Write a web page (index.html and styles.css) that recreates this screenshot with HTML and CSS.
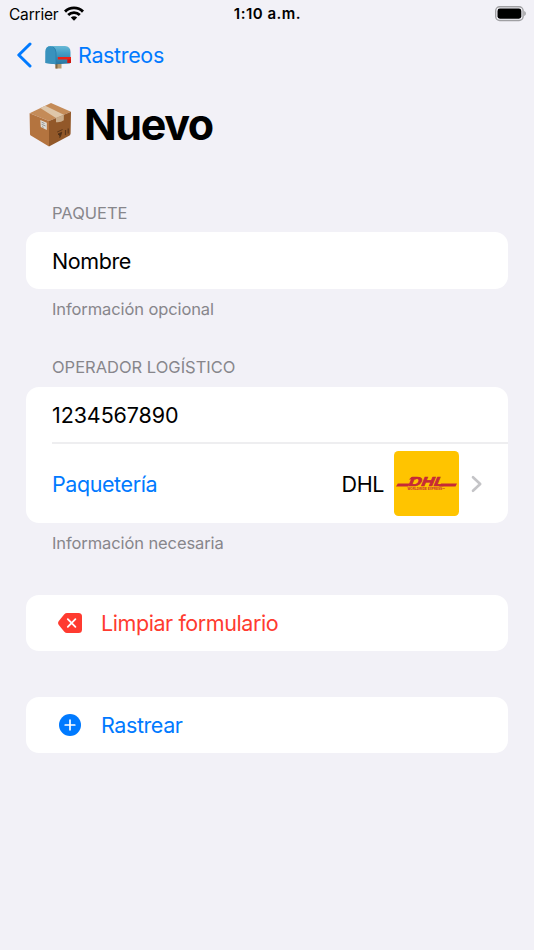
FILE: index.html
```html
<!DOCTYPE html>
<html lang="es">
<head>
    <meta charset="utf-8">
    <title>Nuevo</title>
    <link rel="stylesheet" href="styles.css">
</head>
<body>
    <header class="status-bar">
        <div class="carrier">
            <span>Carrier</span>
            <svg class="wifi" width="20" height="15" viewBox="0 0 20 15">
                <g fill="none" stroke="#000" stroke-width="2.9">
                    <path d="M1 5.6C6 .6 14 .6 19 5.6"/>
                    <path d="M4.2 9C7.5 5.8 12.5 5.8 15.8 9"/>
                </g>
                <path d="M10 14.7L6.8 11.5C8.6 9.9 11.4 9.9 13.2 11.5Z"/>
            </svg>
        </div>
        <span class="time">1:10 a.m.</span>
        <svg class="battery" width="32" height="16" viewBox="0 0 32 16">
            <rect x=".7" y=".7" width="27.4" height="13.8" rx="4" fill="none" stroke="#a0a0a3" stroke-width="1.4"/>
            <rect x="2.5" y="2.5" width="23.8" height="10.2" rx="2.4"/>
            <path d="M29.2 5.1C31.4 6 31.4 9.2 29.2 10.1Z" fill="#a0a0a3"/>
        </svg>
    </header>

    <nav class="nav">
        <svg class="back" width="16" height="26" viewBox="0 0 16 26">
            <path d="M14 2L2.8 13L14 24" fill="none" stroke="#007aff" stroke-width="3" stroke-linecap="round" stroke-linejoin="round"/>
        </svg>
        <svg class="mailbox" width="27" height="24" viewBox="0 0 27 24">
            <defs>
                <linearGradient id="boxTop" x1="0" y1="0" x2="0" y2="1">
                    <stop offset="0" stop-color="#68b9d6"/>
                    <stop offset=".35" stop-color="#46a0c7"/>
                    <stop offset="1" stop-color="#27749f"/>
                </linearGradient>
            </defs>
            <path d="M10.5 17H16.5V23.5H10.5Z" fill="#b99b6d"/>
            <path d="M10.5 17H12.5V23.5H10.5Z" fill="#826844"/>
            <path d="M.5 18V6.5Q.5 1 6 1H20Q25.5 1.5 25.5 7V17Q25.5 18.5 24 18.5L11 19.3Z" fill="url(#boxTop)"/>
            <path d="M.5 18V6.5Q.5 1.2 5.5 1.2Q11 1.6 11 7.5V19.3Z" fill="#3992bd"/>
            <path d="M11 19.2V7.5Q10.8 3.5 8 1.8" fill="none" stroke="#287ca8" stroke-width=".8"/>
            <path d="M12.8 12H26V18H22.5V14.6H12.8Z" fill="#ed2115"/>
            <path d="M22.5 14.5H26V18H22.5Z" fill="#cf160f"/>
        </svg>
        <span class="nav-text">Rastreos</span>
    </nav>

    <div class="title">
        <svg width="44" height="46" viewBox="0 0 44 46">
            <path d="M1.6 11.2L23 1L43 9.8L21 19Z" fill="#c48b58"/>
            <path d="M1.6 11.2L21 19V44.5L2.8 33.5Q2 33 2 32Z" fill="#b4743f"/>
            <path d="M21 19L43 9.8L42.6 31.5Q42.6 32.8 41.6 33.4L21 44.5Z" fill="#925829"/>
            <path d="M12.3 6.1L17.3 3.7L35.8 12.8L28 16Z" fill="#dec6a9"/>
            <path d="M28 16L35.8 12.8V18.2Q33 20.7 28 20.2Z" fill="#c9ac8b"/>
            <path d="M12.3 18L18.8 20.8V28L12.8 25Z" fill="#dedcd6"/>
            <path d="M13.6 20.2L16.5 21.5M13.6 22.3L17.5 24M14 24.6L15.6 25.4" stroke="#8b8b89" stroke-width=".9"/>
            <path d="M29.2 30L34.6 27.5M30 32L33.8 30.2L32.5 34.5ZM31.8 34V36" fill="#4e2f17" stroke="#4e2f17" stroke-width=".8"/>
            <path d="M37.5 28V33M40.2 26.5V31.5" stroke="#5d371b" stroke-width="1.2"/>
        </svg>
        <h1>Nuevo</h1>
    </div>

    <main>
        <section class="section-name">
            <h2 class="package-label">PAQUETE</h2>
            <div class="card">
                <div class="row"><span class="name">Nombre</span></div>
            </div>
            <p class="optional">Información opcional</p>
        </section>

        <section class="section-operator">
            <h2 class="operator-label">OPERADOR LOGÍSTICO</h2>
            <div class="card">
                <div class="row"><span class="number">1234567890</span></div>
                <div class="row row-operator">
                    <span class="operator">Paquetería</span>
                    <span class="value">DHL</span>
                    <svg class="logo" width="65" height="65" viewBox="0 0 65 65">
                        <rect width="65" height="65" rx="4.5" fill="#ffc400"/>
                        <g fill="#c62a36">
                            <path d="M3.8 32.4H15.8L14 35.6H2Z"/>
                            <path d="M47 32.4H63L61.5 35.6H45Z"/>
                            <path d="M17.5 26H24L22 28.4H15Z"/>
                            <text class="logo-name" transform="translate(13.5 35.4) skewX(-22)" textLength="36" lengthAdjust="spacingAndGlyphs">DHL</text>
                            <text class="logo-sub" x="13.5" y="39.4" textLength="37.5" lengthAdjust="spacingAndGlyphs">WORLDWIDE EXPRESS™</text>
                        </g>
                    </svg>
                    <svg class="chevron" width="12" height="18" viewBox="0 0 12 18">
                        <path d="M2 2.2L9.2 9L2 15.8" fill="none" stroke="#c4c4c7" stroke-width="2.6" stroke-linecap="round" stroke-linejoin="round"/>
                    </svg>
                </div>
            </div>
            <p class="required">Información necesaria</p>
        </section>

        <div class="card action clear">
            <svg width="24" height="20" viewBox="0 0 24 20">
                <path d="M9 0H20.5Q24 0 24 3.5V16.5Q24 20 20.5 20H9Q7.5 20 6.3 18.8L.8 12Q-.7 10 .8 8L6.3 1.2Q7.5 0 9 0Z" fill="#ff3b30"/>
                <path d="M9.8 6.2L17.4 13.8M17.4 6.2L9.8 13.8" stroke="#fff" stroke-width="1.8" stroke-linecap="round"/>
            </svg>
            <span>Limpiar formulario</span>
        </div>

        <div class="card action track">
            <svg width="24" height="22" viewBox="0 0 24 22">
                <circle cx="12" cy="11" r="11" fill="#007aff"/>
                <path d="M12 6.2V15.8M7.2 11H16.8" stroke="#fff" stroke-width="1.7" stroke-linecap="round"/>
            </svg>
            <span>Rastrear</span>
        </div>
    </main>
</body>
</html>
```
FILE: styles.css
```css
* {
    box-sizing: border-box;
}

body {
    font-family: Inter, "Liberation Sans", sans-serif;
    font-size: 21.5px;
    letter-spacing: -0.42px;
    background-color: #f2f1f7;
    color: #000;
    margin: 0;
    min-height: 950px;
}

svg {
    display: block;
    flex-shrink: 0;
}

h1, h2, p {
    margin: 0;
}

.status-bar {
    display: grid;
    grid-template-columns: 1fr auto 1fr;
    align-items: center;
    height: 28px;
    padding: 0 7px 0 9px;
    font-size: 15.5px;
}

.carrier {
    display: flex;
    align-items: center;
    gap: 6px;
    letter-spacing: -0.2px;
}

.wifi {
    margin-top: -2px;
}

.time {
    font-size: 15px;
    font-weight: 600;
    letter-spacing: 0.5px;
    margin: -1px 1px 0 0;
}

.battery {
    justify-self: end;
    margin-top: -1px;
}

.nav {
    display: flex;
    align-items: center;
    height: 54px;
    padding-left: 16px;
    color: #007aff;
}

.mailbox {
    margin: 3px 6px 0 13px;
}

.nav-text {
    letter-spacing: -0.35px;
    margin-top: -1px;
}

.title {
    display: flex;
    align-items: center;
    height: 86px;
    padding-left: 28px;
    gap: 12px;
}

.title svg {
    margin-top: -1px;
}

h1 {
    font-size: 43px;
    font-weight: 700;
    line-height: 52px;
    letter-spacing: -1.4px;
    margin-top: -2px;
}

main {
    padding: 34px 26px 0;
}

h2, p {
    color: #87868b;
    font-size: 16.5px;
    font-weight: 400;
    line-height: 22px;
    letter-spacing: -0.1px;
    padding-left: 26px;
}

h2 {
    letter-spacing: 0;
    margin-bottom: 8px;
}

p {
    margin-top: 9px;
}

.section-operator {
    margin-top: 37px;
}

.operator-label {
    line-height: 21px;
    margin-bottom: 9px;
}

.card {
    background-color: #fff;
    border-radius: 13px;
}

.row {
    display: flex;
    align-items: center;
    height: 57px;
    padding-left: 26px;
}

.number {
    letter-spacing: -0.1px;
    margin-top: -1px;
}

.row-operator {
    position: relative;
    height: 79px;
    padding-right: 25px;
}

/* separator starts at the text, not at the card edge */
.row-operator::before {
    content: "";
    position: absolute;
    top: -2px;
    left: 26px;
    right: 0;
    height: 2px;
    background-color: #eeeef0;
}

.operator {
    flex: 1;
    color: #007aff;
}

.logo {
    margin: 0 12px 0 10px;
}

.logo-name {
    font-family: "Liberation Sans", sans-serif;
    font-size: 13px;
    font-weight: 700;
    letter-spacing: 0;
    stroke: #c62a36;
    stroke-width: 0.7px;
}

.logo-sub {
    font-family: "Liberation Sans", sans-serif;
    font-size: 3.4px;
    font-weight: 700;
    letter-spacing: 0;
}

.action {
    display: flex;
    align-items: center;
    height: 56px;
    padding-left: 32px;
    gap: 19px;
}

.clear {
    margin-top: 41px;
    color: #ff3b30;
}

.track {
    margin-top: 46px;
    color: #007aff;
}
```
